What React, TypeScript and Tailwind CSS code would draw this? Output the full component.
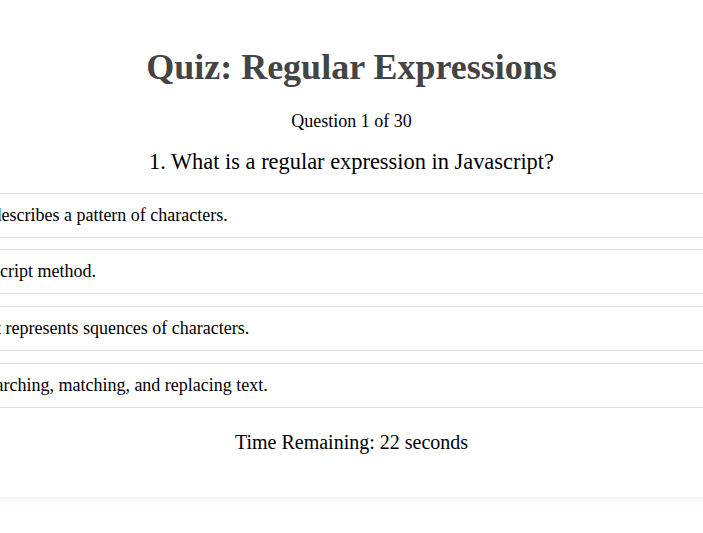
const options = [
  "A regular expression is an object that describes a pattern of characters.",
  "A regular expression is a built-in Javascript method.",
  "A regular expression is an element that represents squences of characters.",
  "A regular expression is a syntax for searching, matching, and replacing text.",
];

export default function App() {
  return (
    <div
      className="w-screen min-h-screen overflow-hidden bg-white flex justify-center items-start text-black"
      style={{ fontFamily: '"Liberation Serif", "Times New Roman", serif' }}
    >
      {/* Quiz card */}
      <div className="w-[1281px] shrink-0 bg-white shadow-[0_0_10px_rgba(0,0,0,0.1)] pt-[46.5px] pb-[43px]">
        <h1 className="text-center text-[36px] leading-[41px] font-bold text-[#444]">
          Quiz: Regular Expressions
        </h1>
        <p className="mt-[23.5px] text-center text-[18px] leading-[21px]">
          Question 1 of 30
        </p>
        <h2 className="mt-[17px] text-center text-[22.4px] leading-[26px]">
          1. What is a regular expression in Javascript?
        </h2>

        <ul className="mt-[17.6px] flex flex-col gap-[11.7px]">
          {options.map((opt, i) => (
            <li
              key={i}
              className="border-y border-[#ddd] pl-[10px] py-[11px] text-[18px] leading-[21px] whitespace-nowrap cursor-pointer"
            >
              {opt}
            </li>
          ))}
        </ul>

        <p className="mt-[23.6px] text-center text-[20px] leading-[23px]">
          Time Remaining: 22 seconds
        </p>
      </div>
    </div>
  );
}
